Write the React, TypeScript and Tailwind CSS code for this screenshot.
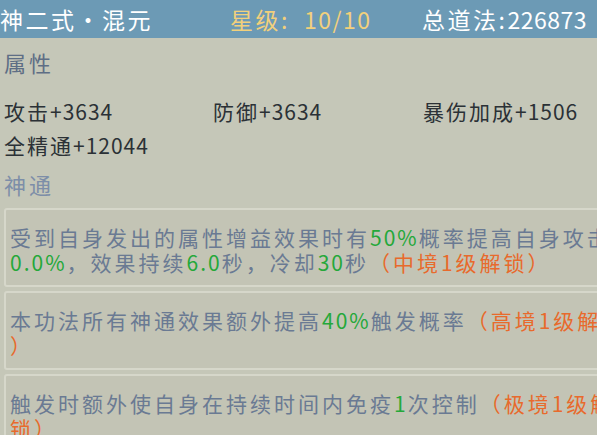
import React from "react";

const G = ({ children }: { children: React.ReactNode }) => (
  <span className="tracking-[2px] text-[#25a83a]">{children}</span>
);
const O = ({ children }: { children: React.ReactNode }) => (
  <span className="text-[#e86a2c]">{children}</span>
);
const N = ({ children }: { children: React.ReactNode }) => (
  <span className="tracking-[1px]">{children}</span>
);

function Card({ lines }: { lines: React.ReactNode[] }) {
  return (
    <div className="ml-[4px] w-[720px] rounded-[3px] border-2 border-[#d6d7ca] bg-[#c3c4b5] pt-[15px] pb-[10px] pl-[4px]">
      {lines.map((l, i) => (
        <div key={i} className="whitespace-nowrap text-[21px] leading-[25px] tracking-[3px] text-[#6a7a93]">
          {l}
        </div>
      ))}
    </div>
  );
}

export default function App() {
  return (
    <div
      className="relative h-[435px] w-[597px] overflow-hidden bg-[#c5c7b8]"
      style={{ fontFamily: '"Noto Sans CJK SC", "Noto Sans", sans-serif' }}
    >
      <div className="flex h-[38px] items-center whitespace-nowrap bg-[#6c9ab5] text-[23px] tracking-[2.5px]">
        <div className="w-[230px] text-white">神二式・混元</div>
        <div className="w-[192px] text-[#f2d07c]">
          星级:<span className="ml-[14px] tracking-[1.5px]">10/10</span>
        </div>
        <div className="text-white">
          总道法:<span className="tracking-[0.5px]">226873</span>
        </div>
      </div>

      <div className="pl-[4px] pt-[9px] text-[22px] leading-[30px] tracking-[3px] text-[#5e6e85]">属性</div>

      <div className="mt-[17px] grid grid-cols-[209px_210px_auto] pl-[4px] text-[21px] leading-[34px] tracking-[2px] text-[#2b3136]">
        <div className="whitespace-nowrap">攻击<N>+3634</N></div>
        <div className="whitespace-nowrap">防御<N>+3634</N></div>
        <div className="whitespace-nowrap">暴伤加成<N>+1506</N></div>
        <div className="whitespace-nowrap">全精通<N>+12044</N></div>
      </div>

      <div className="pl-[4px] pt-[6px] text-[22px] leading-[32px] tracking-[3px] text-[#7d8ea8]">神通</div>

      <div className="mt-[8px] flex flex-col gap-[4px]">
        <Card
          lines={[
            <>受到自身发出的属性增益效果时有<G>50%</G>概率提高自身攻击1</>,
            <><G>0.0%</G>，效果持续<G>6.0</G>秒，冷却<G>30</G>秒<O>（中境1级解锁）</O></>,
          ]}
        />
        <Card
          lines={[
            <>本功法所有神通效果额外提高<G>40%</G>触发概率<O>（高境1级解锁</O></>,
            <O>）</O>,
          ]}
        />
        <Card
          lines={[
            <>触发时额外使自身在持续时间内免疫<G>1</G>次控制<O>（极境1级解</O></>,
            <O>锁）</O>,
          ]}
        />
      </div>
    </div>
  );
}
